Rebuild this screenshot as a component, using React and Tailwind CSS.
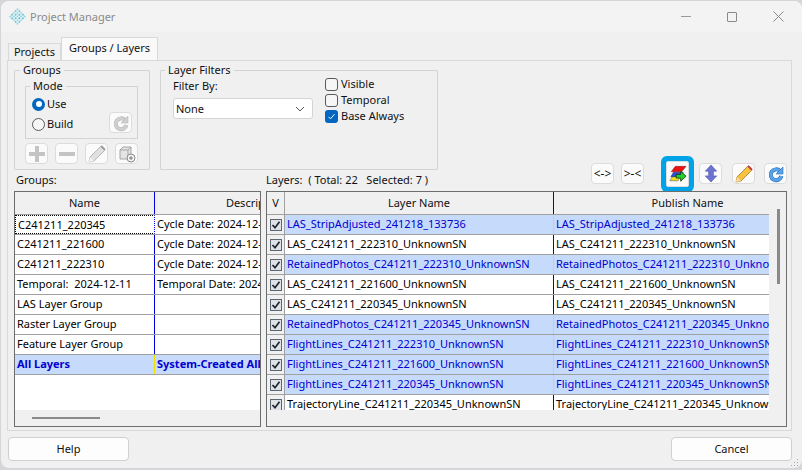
import React from "react";

const FONT = "font-['Noto_Sans',sans-serif]";

const groups = [
  { name: "C241211_220345", desc: "Cycle Date: 2024-12-11 22:03:45", focus: true },
  { name: "C241211_221600", desc: "Cycle Date: 2024-12-11 22:16:00" },
  { name: "C241211_222310", desc: "Cycle Date: 2024-12-11 22:23:10" },
  { name: "Temporal:  2024-12-11", desc: "Temporal Date: 2024-12-11" },
  { name: "LAS Layer Group", desc: "" },
  { name: "Raster Layer Group", desc: "" },
  { name: "Feature Layer Group", desc: "" },
  { name: "All Layers", desc: "System-Created All Layers Group", bold: true, selected: true },
];

const layers = [
  { name: "LAS_StripAdjusted_241218_133736", selected: true },
  { name: "LAS_C241211_222310_UnknownSN" },
  { name: "RetainedPhotos_C241211_222310_UnknownSN", selected: true },
  { name: "LAS_C241211_221600_UnknownSN" },
  { name: "LAS_C241211_220345_UnknownSN" },
  { name: "RetainedPhotos_C241211_220345_UnknownSN", selected: true },
  { name: "FlightLines_C241211_222310_UnknownSN", selected: true },
  { name: "FlightLines_C241211_221600_UnknownSN", selected: true },
  { name: "FlightLines_C241211_220345_UnknownSN", selected: true },
  { name: "TrajectoryLine_C241211_220345_UnknownSN" },
];

function Logo() {
  const cells = [];
  for (let i = 0; i < 5; i++) {
    for (let j = 0; j < 5; j++) {
      const x = 8 + (i - j) * 1.7;
      const y = 8 + (i + j - 4) * 1.7;
      cells.push(<rect key={`${i}-${j}`} x={x - 0.8} y={y - 0.8} width="1.6" height="1.6" fill={(i + j) % 2 ? "#58c4d8" : "#8fd8e4"} transform={`rotate(45 ${x} ${y})`} />);
    }
  }
  return <svg width="17" height="17" viewBox="0 0 16 16">{cells}</svg>;
}

function IconButton({ children, className = "" }) {
  return (
    <div className={`flex h-[21px] w-[23px] shrink-0 items-center justify-center rounded-[4px] border border-[#dcdcdc] bg-[#fbfbfb] ${className}`}>
      {children}
    </div>
  );
}

function RefreshIcon({ color, edge }) {
  return (
    <svg width="18" height="18" viewBox="0 0 18 18">
      <path d="M13 6A5.4 5.4 0 1 0 14.4 11" fill="none" stroke={edge} strokeWidth="4" />
      <path d="M13 6A5.4 5.4 0 1 0 14.4 11" fill="none" stroke={color} strokeWidth="2.8" />
      <path d="M16 2v7h-7z" fill={color} stroke={edge} strokeWidth="0.6" />
    </svg>
  );
}

function PencilIcon({ body, tip, eraser, wood }) {
  return (
    <svg width="20" height="20" viewBox="0 0 20 20">
      <path d="M13.5 2.5l4 4L7 17l-5 1 1-5z" fill={body} stroke={tip} strokeWidth="0.8" />
      <path d="M13.5 2.5l1.2-1.2 4 4-1.2 1.2z" fill={eraser} />
      <path d="M3 13l4 4-5 1z" fill={wood} />
    </svg>
  );
}

function LayersIcon() {
  return (
    <svg width="18" height="18" viewBox="0 0 20 20">
      <path d="M4 12.5h9l-3 5H1z" fill="#f5e020" stroke="#333" strokeWidth="0.5" />
      <path d="M5 8h11l-4 5H2z" fill="#2a50e0" stroke="#223" strokeWidth="0.5" />
      <path d="M7 1.5h12l-5 6H2.5z" fill="#ee1111" stroke="#611" strokeWidth="0.5" />
      <path d="M8 10.5h5V7l6 5.5-6 5.5v-3.500H8z" fill="#26d02a" stroke="#0a3a0a" strokeWidth="0.9" />
    </svg>
  );
}

function UpDownIcon() {
  return (
    <svg width="14" height="19" viewBox="0 0 14 20">
      <path d="M7 1l6 6.500H9.500v5H13L7 19l-6-6.500h3.500v-5H1z" fill="#6c72d0" stroke="#4a4fa8" strokeWidth="0.6" />
    </svg>
  );
}

function Radio({ checked, label }) {
  return (
    <div className="flex h-[20px] items-center">
      {checked ? (
        <div className="flex h-[13px] w-[13px] items-center justify-center rounded-full bg-[#0067c0]">
          <div className="h-[6px] w-[6px] rounded-full bg-white" />
        </div>
      ) : (
        <div className="h-[13px] w-[13px] rounded-full border border-[#5a5a5a] bg-[#f6f6f6]" />
      )}
      <span className="ml-[2px]">{label}</span>
    </div>
  );
}

function Checkbox({ checked, label }) {
  return (
    <div className="flex h-[16px] items-center">
      {checked ? (
        <div className="flex h-[13px] w-[13px] items-center justify-center rounded-[3px] bg-[#0067c0]">
          <svg width="9" height="9" viewBox="0 0 9 9">
            <path d="M1.500 4.800l2 2 4-4.600" fill="none" stroke="white" strokeWidth="1" />
          </svg>
        </div>
      ) : (
        <div className="h-[13px] w-[13px] rounded-[3px] border border-[#5a5a5a] bg-[#f6f6f6]" />
      )}
      <span className="ml-[3px]">{label}</span>
    </div>
  );
}

function CellCheck() {
  return (
    <div className="flex h-[12px] w-[12px] items-center justify-center border border-[#5c6670] bg-[#dfe3e8]">
      <svg width="10" height="10" viewBox="0 0 10 10">
        <path d="M1.500 5l2.500 2.700L8.500 1.800" fill="none" stroke="#1d2530" strokeWidth="1.700" />
      </svg>
    </div>
  );
}

function HeaderCell({ children, className = "" }) {
  return (
    <div className={`flex h-[22px] shrink-0 items-center justify-center border-r border-r-[#a0a0a0] ${className}`}>{children}</div>
  );
}

function GroupsTable() {
  return (
    <div className="flex h-[236px] w-[247px] shrink-0 flex-col border border-[#6d6d6d] bg-[#f0f0f0]">
      <div className="h-[218px] overflow-hidden bg-white">
        <div className="flex border-b border-b-[#a0a0a0] bg-[#f0f0f0]">
          <HeaderCell className="w-[140px] !border-r-[#0000e0]">Name</HeaderCell>
          <HeaderCell className="w-[202px]">Description</HeaderCell>
        </div>
        {groups.map((g) => (
          <div key={g.name} className={`flex h-[20px] border-b border-b-[#a0a0a0] ${g.selected ? "bg-[#c6dafc] text-[#0000d0]" : "text-black"} ${g.bold ? "font-bold" : ""}`}>
            <div className={`w-[140px] shrink-0 truncate whitespace-pre border-r pl-[2px] leading-[17px] ${g.selected ? "border-r-[#f0e000]" : "border-r-[#0000e0]"} ${g.focus ? "border-l border-t border-b border-dotted border-l-black border-t-black border-b-black" : ""}`}>
              {g.name}
            </div>
            <div className="w-[202px] shrink-0 whitespace-nowrap pl-[2px] leading-[17px]">{g.desc}</div>
          </div>
        ))}
      </div>
      <div className="flex h-[16px] items-center pl-[17px]">
        <div className="h-[2px] w-[68px] bg-[#8a8a8a]" />
      </div>
    </div>
  );
}

function LayersTable() {
  return (
    <div className="flex h-[236px] w-[521px] shrink-0 border border-[#6d6d6d] bg-[#f0f0f0]">
      <div className="h-[218px] w-[502px] overflow-hidden bg-white">
        <div className="flex border-b border-b-[#a0a0a0] bg-[#f0f0f0]">
          <HeaderCell className="w-[18px]">V</HeaderCell>
          <HeaderCell className="w-[269px] !border-r-[#0000e0]">Layer Name</HeaderCell>
          <HeaderCell className="w-[268px]">Publish Name</HeaderCell>
        </div>
        {layers.map((l) => (
          <div key={l.name} className={`flex h-[20px] border-b border-b-[#a0a0a0] ${l.selected ? "bg-[#c6dafc] text-[#0000d0]" : "text-black"}`}>
            <div className="flex w-[18px] shrink-0 items-center justify-center border-r border-r-[#a0a0a0] bg-[#f0f0f0]">
              <CellCheck />
            </div>
            <div className={`w-[269px] shrink-0 overflow-hidden whitespace-nowrap border-r pl-[2px] leading-[17px] ${l.selected ? "border-r-[#f0e000]" : "border-r-[#0000e0]"}`}>
              {l.name}
            </div>
            <div className="w-[268px] shrink-0 whitespace-nowrap pl-[2px] leading-[17px]">{l.name}</div>
          </div>
        ))}
      </div>
      <div className="flex flex-1 justify-center pt-[17px] pl-[2px]">
        <div className="h-[75px] w-[3px] bg-[#8a8a8a]" />
      </div>
    </div>
  );
}

export default function App() {
  return (
    <div className={`h-[470px] w-[802px] overflow-hidden bg-[#d4d6da] pl-px pt-px text-[11px] leading-4 text-[#111] ${FONT}`}>
      <div className="relative flex h-[467px] w-[801px] flex-col rounded-[8px] bg-[#f0f0f0]">
        {/* title bar */}
        <div className="flex h-[31px] shrink-0 items-center rounded-t-[8px] bg-[#f3f3f3] pl-[8px]">
          <Logo />
          <span className="ml-[4px] text-[#8a8a8a]">Project Manager</span>
          <div className="ml-auto flex items-center pr-[18px]">
            <div className="mr-[36px] h-px w-[10px] bg-[#9a9a9a]" />
            <div className="mr-[36px] h-[10px] w-[10px] rounded-[1px] border border-[#8a8a8a]" />
            <svg width="11" height="11" viewBox="0 0 11 11">
              <path d="M.5.5l10 10M10.500.5l-10 10" stroke="#8a8a8a" strokeWidth="1" />
            </svg>
          </div>
        </div>

        {/* tabs */}
        <div className="flex h-[28px] shrink-0 items-end pl-[7px]">
          <div className="flex h-[17px] w-[53px] items-center justify-center border border-b-0 border-[#d9d9d9] bg-[#f0f0f0]">Projects</div>
          <div className="flex h-[23px] w-[97px] items-center justify-center border border-b-0 border-[#d9d9d9] bg-[#f9f9f9] pb-[2px]">Groups / Layers</div>
        </div>

        {/* panel */}
        <div className="ml-[6px] h-[371px] w-[785px] shrink-0 border border-[#d9d9d9] pl-[6px] pt-px">
          <div className="flex">
            <div className="w-[572px] shrink-0">
              <div className="flex h-[108px]">
                <fieldset className="h-[108px] w-[136px] rounded-[1px] border border-[#d4d4d4] pl-[10px]">
                  <legend className="-ml-[5px] px-[3px] leading-4">Groups</legend>
                  <fieldset className="h-[61px] w-[113px] border border-[#d4d4d4] pl-[6px]">
                    <legend className="-ml-[2px] px-[3px] leading-4">Mode</legend>
                    <div className="flex">
                      <div className="w-[77px]">
                        <Radio checked label="Use" />
                        <Radio label="Build" />
                      </div>
                      <IconButton className="mt-[18px]">
                        <RefreshIcon color="#d0d0d0" edge="#b8b8b8" />
                      </IconButton>
                    </div>
                  </fieldset>
                  <div className="mt-[4px] flex gap-[7px]">
                    <IconButton>
                      <svg width="16" height="16" viewBox="0 0 16 16"><path d="M6 0h4v6h6v4h-6v6H6v-6H0V6h6z" fill="#c4c4c4" /></svg>
                    </IconButton>
                    <IconButton>
                      <svg width="16" height="16" viewBox="0 0 16 16"><path d="M0 6h16v4H0z" fill="#c4c4c4" /></svg>
                    </IconButton>
                    <IconButton>
                      <PencilIcon body="#e0e0e0" tip="#a8a8a8" eraser="#9a9a9a" wood="#f4f4f4" />
                    </IconButton>
                    <IconButton>
                      <svg width="18" height="18" viewBox="0 0 18 18">
                        <path d="M2 5l3-3h8v9l-3 3H2z" fill="#e4e4e4" stroke="#a4a4a4" />
                        <path d="M2 5h8v9M10 5l3-3" fill="none" stroke="#a4a4a4" />
                        <circle cx="13" cy="13" r="4" fill="#f4f4f4" stroke="#8a8a8a" />
                        <path d="M13 11v4M11 13h4" stroke="#7a7a7a" />
                      </svg>
                    </IconButton>
                  </div>
                </fieldset>
                <fieldset className="ml-[10px] h-[108px] w-[278px] rounded-[1px] border border-[#d4d4d4] pl-[12px]">
                  <legend className="-ml-[8px] px-[3px] leading-4">Layer Filters</legend>
                  <div className="flex">
                    <div className="w-[152px]">
                      <div>Filter By:</div>
                      <div className="mt-[4px] flex h-[21px] w-[140px] items-center justify-between rounded-[3px] border border-[#d4d4d4] bg-white pl-[2px] pr-[7px]">
                        None
                        <svg width="10" height="6" viewBox="0 0 10 6"><path d="M1 1l4 4 4-4" fill="none" stroke="#555" /></svg>
                      </div>
                    </div>
                    <div className="-mt-[2px]">
                      <Checkbox label="Visible" />
                      <Checkbox label="Temporal" />
                      <Checkbox checked label="Base Always" />
                    </div>
                  </div>
                </fieldset>
              </div>
              <div className="mb-[2px] flex h-[19px] items-center">
                <span className="w-[252px] pl-[2px]">Groups:</span>
                <span className="whitespace-pre">Layers:  ( Total: 22   Selected: 7 )</span>
              </div>
            </div>
            <div className="flex flex-1 items-end pb-[7px] pl-[5px]">
              <IconButton>
                <span className="text-[12px] leading-none">{"<->"}</span>
              </IconButton>
              <IconButton className="ml-[7px]">
                <span className="text-[12px] leading-none">{">-<"}</span>
              </IconButton>
              <IconButton className="-mb-[3px] ml-[22px] !h-[26px] !rounded-[2px] ring-[5px] ring-[#00a2e8]">
                <LayersIcon />
              </IconButton>
              <IconButton className="ml-[10px]">
                <UpDownIcon />
              </IconButton>
              <IconButton className="ml-[10px]">
                <PencilIcon body="#f5c242" tip="#a87a20" eraser="#c8323c" wood="#f8e0b0" />
              </IconButton>
              <IconButton className="ml-[9px]">
                <RefreshIcon color="#5aa5ea" edge="#2a6fc0" />
              </IconButton>
            </div>
          </div>
          <div className="flex gap-[5px]">
            <GroupsTable />
            <LayersTable />
          </div>
        </div>

        {/* footer buttons */}
        <div className="flex flex-1 items-start justify-between pl-[7px] pr-[10px] pt-[6px]">
          <div className="flex h-[24px] w-[121px] items-center justify-center rounded-[4px] border border-[#d0d0d0] bg-[#fdfdfd]">Help</div>
          <div className="flex h-[24px] w-[121px] items-center justify-center rounded-[4px] border border-[#d0d0d0] bg-[#fdfdfd]">Cancel</div>
        </div>

        {/* resize grip */}
        <svg className="absolute bottom-[1px] right-[3px]" width="9" height="9" viewBox="0 0 9 9">
          <path d="M7 1h1v1H7zM4 4h1v1H4zM7 4h1v1H7zM1 7h1v1H1zM4 7h1v1H4zM7 7h1v1H7z" fill="#a8a8a8" />
        </svg>
      </div>
    </div>
  );
}
